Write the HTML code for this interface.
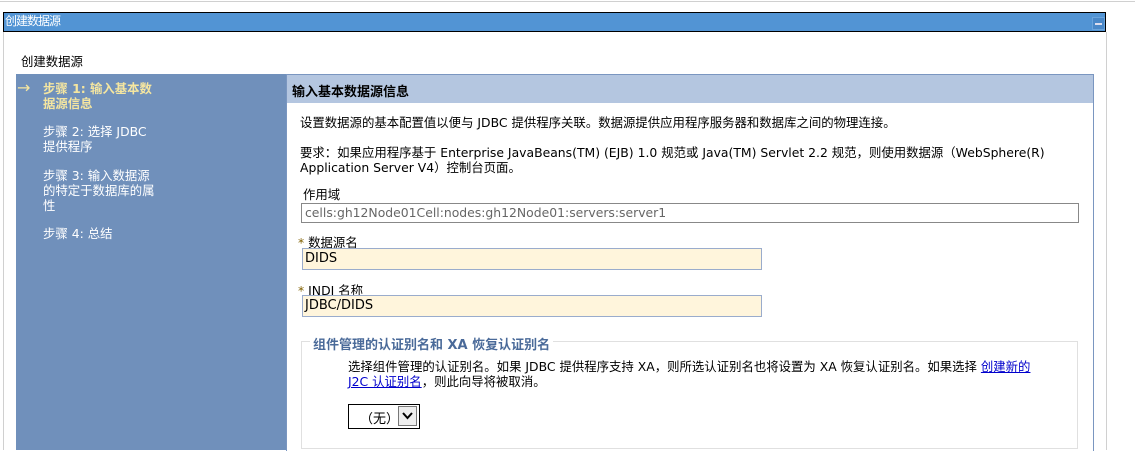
<!DOCTYPE html><html><head><meta charset="utf-8"><style>
body{margin:0;width:1135px;height:450px;overflow:hidden;background:#fff;font-family:"DejaVu Sans","Noto Sans CJK SC",sans-serif;font-size:12.4px;color:#000;position:relative}
.a{position:absolute;white-space:nowrap}
</style></head><body>
<div class="a" style="left:0;top:1px;width:1135px;height:1px;background:#d0d0d0"></div>
<div class="a" style="left:3px;top:12px;width:1101px;height:18px;background:#5294d4;border:1px solid #000"></div>
<div class="a" style="left:5px;top:14px;color:#fff;font-size:12px;line-height:15px;letter-spacing:-1px">创建数据源</div>
<div class="a" style="left:1092px;top:17px;width:11px;height:11px;background:#4a88c8;border:1px solid #6aa4dc"><div style="margin:5px 2px;height:2px;background:#dde"></div></div>
<div class="a" style="left:3px;top:32px;width:1px;height:418px;background:#d0d0d0"></div>
<div class="a" style="left:1106px;top:32px;width:1px;height:418px;background:#d0d0d0"></div>
<div class="a" style="left:21px;top:52px;font-size:12.4px">创建数据源</div>
<div class="a" style="left:16px;top:74px;width:270px;height:376px;background:#7090bb"></div>
<div class="a" style="left:17px;top:78px;color:#f5e6a0;font-size:16px">→</div>
<div class="a" style="left:43px;top:81px;color:#f5e6a0;line-height:15px;font-weight:bold">步骤 1: 输入基本数<br>据源信息</div>
<div class="a" style="left:43px;top:124px;color:#fff;line-height:15px">步骤 2: 选择 JDBC<br>提供程序</div>
<div class="a" style="left:43px;top:168px;color:#fff;line-height:15px">步骤 3: 输入数据源<br>的特定于数据库的属<br>性</div>
<div class="a" style="left:43px;top:226px;color:#fff;line-height:15px">步骤 4: 总结</div>
<div class="a" style="left:286px;top:74px;width:806px;height:376px;border:1px solid #7a96c0;border-bottom:none"></div>
<div class="a" style="left:287px;top:75px;width:806px;height:28px;background:#b4c6e0"></div>
<div class="a" style="left:292px;top:81px;font-size:13px;font-weight:bold">输入基本数据源信息</div>
<div class="a" style="left:300px;top:113px">设置数据源的基本配置值以便与 JDBC 提供程序关联。数据源提供应用程序服务器和数据库之间的物理连接。</div>
<div class="a" style="left:300px;top:145px;line-height:15px">要求：如果应用程序基于 Enterprise JavaBeans(TM) (EJB) 1.0 规范或 Java(TM) Servlet 2.2 规范，则使用数据源（WebSphere(R)<br>Application Server V4）控制台页面。</div>
<div class="a" style="left:303px;top:185px">作用域</div>
<div class="a" style="left:301px;top:203px;width:773px;height:18px;border:1px solid #888;color:#666;line-height:18px;padding-left:3px">cells:gh12Node01Cell:nodes:gh12Node01:servers:server1</div>
<div class="a" style="left:298px;top:233px"><span style="color:#806000">*</span> 数据源名</div>
<div class="a" style="left:302px;top:248px;width:456px;height:20px;background:#fff5dc;border:1px solid #9aaccc;line-height:20px;padding-left:2px;font-size:13px">DIDS</div>
<div class="a" style="left:298px;top:281px"><span style="color:#806000">*</span> JNDI 名称</div>
<div class="a" style="left:302px;top:295px;width:456px;height:20px;background:#fff5dc;border:1px solid #9aaccc;line-height:20px;padding-left:2px;font-size:13px">JDBC/DIDS</div>
<div class="a" style="left:301px;top:341px;width:775px;height:106px;border:1px solid #e0e0e0"></div>
<div class="a" style="left:310px;top:334px;background:#fff;padding:0 3px;color:#4a6a99;font-weight:bold;font-size:13px">组件管理的认证别名和 XA 恢复认证别名</div>
<div class="a" style="left:348px;top:359px;line-height:15px">选择组件管理的认证别名。如果 JDBC 提供程序支持 XA，则所选认证别名也将设置为 XA 恢复认证别名。如果选择 <span style="color:#00c;text-decoration:underline">创建新的</span><br><span style="color:#00c;text-decoration:underline">J2C 认证别名</span>，则此向导将被取消。</div>
<div class="a" style="left:348px;top:404px;width:70px;height:23px;border:1px solid #000"></div>
<div class="a" style="left:360px;top:408px;font-size:13px">（无）</div>
<div class="a" style="left:398px;top:406px;width:17px;height:18px;border:1px solid #777;background:#eee;font-size:12px;text-align:center;line-height:18px">
<svg width="11" height="8" viewBox="0 0 11 8"><path d="M1 1L5.5 6L10 1" stroke="#000" stroke-width="2" fill="none"/></svg></div>
</body></html>
